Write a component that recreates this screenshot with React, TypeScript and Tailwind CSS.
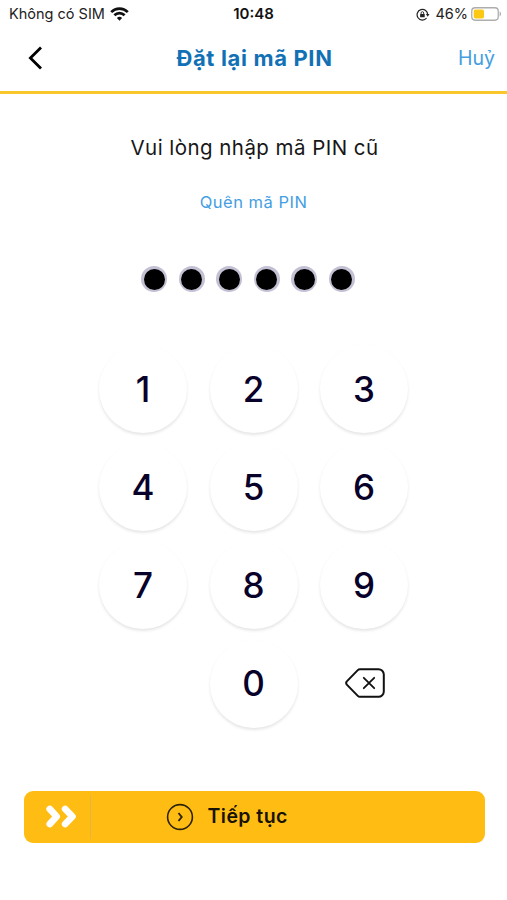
import React from 'react';

const KEYS = ['1', '2', '3', '4', '5', '6', '7', '8', '9'];

const WifiIcon: React.FC = () => (
  <svg width="19" height="15" viewBox="0 0 19 15" fill="none" stroke="#111" strokeWidth="2.7">
    <path d="M1.2 5.1a11.8 11.8 0 0 1 16.6 0" />
    <path d="M4.4 8.3a7.2 7.2 0 0 1 10.2 0" />
    <path d="M6.9 10.9a3.8 3.8 0 0 1 5.2 0L9.5 13.7z" fill="#111" stroke="none" />
  </svg>
);

const RotationLockIcon: React.FC = () => (
  <svg width="14" height="13" viewBox="0 0 14 13" fill="none" stroke="#222" strokeWidth="1.2">
    <path d="M10.6 10a5.3 5.3 0 1 1 1.1-3.1" />
    <path d="M9.9 6h3.6l-1.8 2.7z" fill="#222" stroke="none" />
    <rect x="4.1" y="5.9" width="4.6" height="3.4" rx="0.5" fill="#222" stroke="none" />
    <path d="M5.1 6.1V5a1.3 1.3 0 0 1 2.6 0v1.1" strokeWidth="0.9" />
  </svg>
);

const BatteryIcon: React.FC = () => (
  <svg width="31" height="14" viewBox="0 0 31 14" fill="none">
    <rect x="0.75" y="0.75" width="26.5" height="12.5" rx="3.4" stroke="#adadad" strokeWidth="1.3" />
    <rect x="2.7" y="2.4" width="10.3" height="9.2" rx="1.8" fill="#fbc814" />
    <path d="M28.6 4.6c1.9.7 1.9 4.1 0 4.8z" fill="#adadad" />
  </svg>
);

const StatusBar: React.FC = () => (
  <div className="grid h-7 grid-cols-3 items-center pl-[9px] pr-[5px] text-[14.5px] text-[#222]">
    <div className="flex items-center gap-[5px] whitespace-nowrap">
      <span>Không có SIM</span>
      <WifiIcon />
    </div>
    <span className="pr-[4px] text-center text-[15px] font-semibold text-[#111]">10:48</span>
    <div className="flex items-center justify-end">
      <RotationLockIcon />
      <span className="ml-[5px] mr-[3px]">46%</span>
      <BatteryIcon />
    </div>
  </div>
);

const Header: React.FC = () => (
  <header className="grid h-[66px] grid-cols-[100px_1fr_100px] items-center border-b-3 border-[#f9c62c] pb-[3px]">
    <button className="pl-7">
      <svg width="14" height="24" viewBox="0 0 14 24" fill="none" stroke="#000" strokeWidth="2.8">
        <path d="M13 1.5 2.4 12 13 22.5" />
      </svg>
    </button>
    <h1 className="pl-[2px] text-center text-[22px] font-bold tracking-[0.65px] text-[#1271b5]">Đặt lại mã PIN</h1>
    <button className="pr-3 pt-[2px] text-right text-[19.5px] text-[#459ee2]">Huỷ</button>
  </header>
);

const KeyButton: React.FC<{ label: string }> = ({ label }) => (
  <button className="flex size-[88px] items-center justify-center rounded-full bg-white text-[35px] font-[480] text-[#08022a] shadow-[0_2px_3px_rgba(0,0,0,0.1)]">
    {label}
  </button>
);

export default function App() {
  return (
    <div className="flex h-[900px] w-[507px] flex-col overflow-hidden bg-white font-['Inter',sans-serif]">
      <StatusBar />
      <Header />

      <main className="flex flex-1 flex-col items-center">
        <p className="mt-[38px] pl-[2px] text-[20.5px] leading-8 tracking-[0.45px] text-[#171717]">Vui lòng nhập mã PIN cũ</p>
        <button className="mt-[26px] text-[16.5px] leading-6 tracking-[0.5px] text-[#459ee2]">Quên mã PIN</button>

        <div className="mr-[11px] mt-[52px] flex gap-[11.5px]">
          {[0, 1, 2, 3, 4, 5].map((i) => (
            <span key={i} className="flex size-[26px] items-center justify-center rounded-full bg-[#c3c0d4]">
              <span className="size-[21px] rounded-full bg-black" />
            </span>
          ))}
        </div>

        <div className="mt-[53px] grid grid-cols-[88px_88px_88px] gap-x-[22.5px] gap-y-[10.2px]">
          {KEYS.map((key) => (
            <KeyButton key={key} label={key} />
          ))}
          <span />
          <KeyButton label="0" />
          <button className="flex items-center justify-center pb-[1px] pl-[1px]">
            <svg width="40" height="30" viewBox="0 0 40 30" fill="none" stroke="#111" strokeWidth="2" strokeLinecap="round" strokeLinejoin="round">
              <path d="M15 1.2h18.5a5.3 5.3 0 0 1 5.3 5.3v17a5.3 5.3 0 0 1-5.3 5.3H15a3 3 0 0 1-2.2-.9L1.8 16.6a2.2 2.2 0 0 1 0-3.2l11-11.3A3 3 0 0 1 15 1.2Z" />
              <path d="m18.8 9.8 10.4 10.4M29.2 9.8 18.8 20.2" strokeWidth="1.8" />
            </svg>
          </button>
        </div>
      </main>

      <button className="mb-[57.5px] ml-[23.5px] flex h-[52px] w-[461px] items-center rounded-[9px] bg-[#ffbd14] text-left">
        <span className="flex h-11 w-[67px] items-center border-r border-[#e6b440] pl-[22px]">
          <svg width="31" height="23" viewBox="0 0 31 23" fill="none" stroke="#fff" strokeWidth="6.8" strokeLinecap="round" strokeLinejoin="round">
            <path d="m3.8 4 6.8 7.5L3.8 19M19.2 4l7.2 7.5-7.2 7.5" />
          </svg>
        </span>
        <svg className="ml-[75px]" width="28" height="28" viewBox="0 0 28 28" fill="none" stroke="#2e2308">
          <circle cx="14" cy="14" r="12.4" strokeWidth="1.6" />
          <path d="m12.5 10 3.2 4-3.2 4" strokeWidth="1.9" />
        </svg>
        <span className="ml-[14px] text-[19.5px] font-semibold tracking-[0.45px] text-[#171204]">Tiếp tục</span>
      </button>
    </div>
  );
}
